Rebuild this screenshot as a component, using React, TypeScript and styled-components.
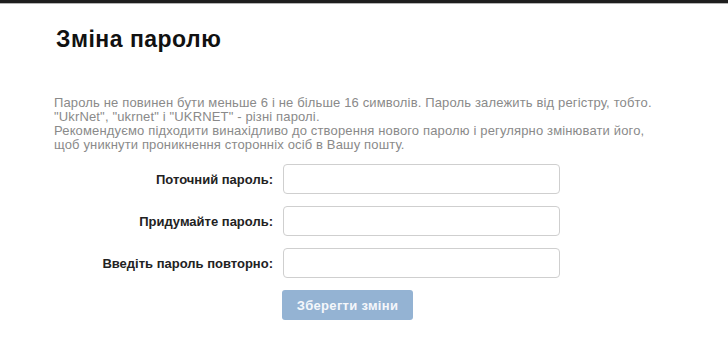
import { Fragment } from "react";
import styled, { createGlobalStyle } from "styled-components";

const GlobalStyle = createGlobalStyle`
  body {
    margin: 0;
    background: #fff;
    font-family: "Liberation Sans", Arial, sans-serif;
  }
`;

const Page = styled.div`
  width: 728px;
  height: 350px;
  box-sizing: border-box;
  border-top: 3px solid #1e1e1e;
  overflow: hidden;
`;

const TopShade = styled.div`
  height: 1px;
  background: #b4b4b4;
`;

const Title = styled.h1`
  margin: 22px 0 0 56px;
  font-size: 23px;
  line-height: 26px;
  letter-spacing: 0.5px;
  font-weight: bold;
  color: #111;
`;

const Notes = styled.div`
  margin: 44px 0 0 54px;
  font-size: 13px;
  line-height: 14px;
  letter-spacing: 0.15px;
  color: #8a8a8a;
`;

const Note = styled.p`
  margin: 0;
`;

const Form = styled.form`
  margin-top: 12px;
  display: grid;
  grid-template-columns: 273px 277px;
  column-gap: 10px;
  row-gap: 12px;
  align-items: center;
`;

const Label = styled.label`
  text-align: right;
  font-size: 13px;
  font-weight: bold;
  color: #222;
`;

const Field = styled.input`
  box-sizing: border-box;
  height: 30px;
  width: 100%;
  border: 1px solid #cfcfcf;
  border-radius: 4px;
  padding: 0 8px;
  font-family: inherit;
  font-size: 13px;
  outline: none;
`;

const Submit = styled.button`
  grid-column: 2;
  justify-self: start;
  width: 131px;
  height: 30px;
  margin-left: -1px;
  border: none;
  border-radius: 3px;
  background: #94b3d3;
  color: #f4f7fb;
  font-family: inherit;
  font-size: 13px;
  letter-spacing: 0.3px;
  font-weight: bold;
  cursor: default;
`;

const fields = [
  { id: "current", label: "Поточний пароль:" },
  { id: "next", label: "Придумайте пароль:" },
  { id: "repeat", label: "Введіть пароль повторно:" },
];

export default function App() {
  return (
    <Page>
      <GlobalStyle />
      <TopShade />
      <Title>Зміна паролю</Title>
      <Notes>
        <Note>
          Пароль не повинен бути меньше 6 і не більше 16 символів. Пароль залежить від регістру, тобто.
          <br />
          "UkrNet", "ukrnet" і "UKRNET" - різні паролі.
        </Note>
        <Note>
          Рекомендуємо підходити винахідливо до створення нового паролю і регулярно змінювати його,
          <br />
          щоб уникнути проникнення сторонніх осіб в Вашу пошту.
        </Note>
      </Notes>
      <Form onSubmit={(e) => e.preventDefault()}>
        {fields.map((f) => (
          <Fragment key={f.id}>
            <Label htmlFor={f.id}>{f.label}</Label>
            <Field id={f.id} type="password" />
          </Fragment>
        ))}
        <Submit type="submit" disabled>
          Зберегти зміни
        </Submit>
      </Form>
    </Page>
  );
}
